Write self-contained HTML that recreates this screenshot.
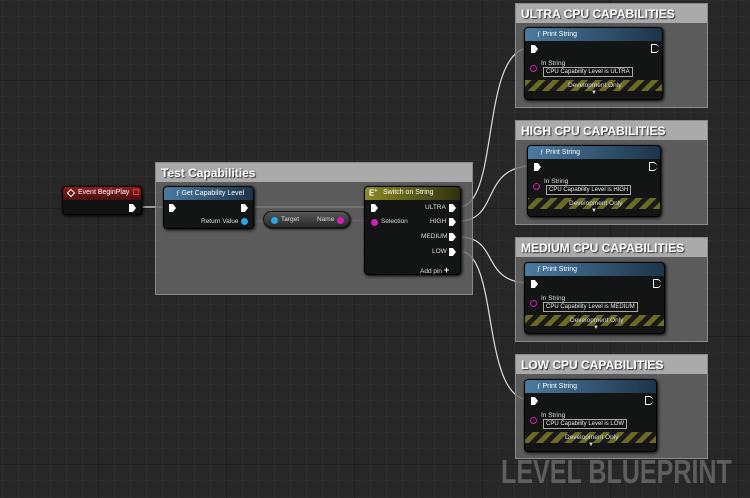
<!DOCTYPE html>
<html><head><style>
*{margin:0;padding:0;box-sizing:border-box}
body{width:750px;height:498px;overflow:hidden;background-color:#272727;
background-image:linear-gradient(#1e1e1e 1px,transparent 1px),linear-gradient(90deg,#1e1e1e 1px,transparent 1px),linear-gradient(#2d2d2d 1px,transparent 1px),linear-gradient(90deg,#2d2d2d 1px,transparent 1px);
background-size:128px 128px,128px 128px,16px 16px,16px 16px;background-position:-30px 80px,-30px 80px,-30px 80px,-30px 80px;
font-family:"Liberation Sans",sans-serif;position:relative;color:#ddd}
.a{position:absolute}
.cm{position:absolute;background:rgba(105,105,105,.8);border:1px solid #8a8a8a}
.cm .h{height:19px;background:#aaaaaa;color:#fff;font-weight:bold;font-size:12px;padding:3px 5px;text-shadow:1px 1px 1px #333;white-space:nowrap}
.nd{position:absolute;background:rgba(16,18,18,.95);border:1px solid #000;border-radius:4px;box-shadow:1px 1px 3px #000;font-size:7px}
.nh{height:13px;border-radius:3px 3px 0 0;color:#fff;padding:2px 0 0 12px;font-size:7px;white-space:nowrap}
.ex{position:absolute;width:7px;height:8px;background:#fff;clip-path:polygon(0 0,55% 0,100% 50%,55% 100%,0 100%)}
.exo{position:absolute;width:8px;height:9px;border:1px solid #fff;border-right:none;border-radius:1px 4px 4px 1px;}
.lb{position:absolute;font-size:6.5px;color:#ddd;white-space:nowrap}
.hz{position:absolute;left:0;right:0;height:11px;background:repeating-linear-gradient(-45deg,#6b6b25 0 5px,#1a1a1a 5px 10px)}
.tb{position:absolute;border:1px solid #aaa;font-size:6px;color:#eee;padding:0 2px;height:10px;line-height:8px;background:#111;white-space:nowrap}
.pin{position:absolute;width:7px;height:7px;border-radius:50%}
</style></head><body>

<svg class="a" width="750" height="498" style="left:0;top:0">
<g fill="none" stroke="#ddd" stroke-width="1.2">
<path d="M141 207 L168 207"/>
<path d="M254 207 L370 207"/>
<path d="M459 207 C500 207,480 48,530 48"/>
<path d="M459 221 C500 221,480 166,533 166"/>
<path d="M459 237 C500 237,480 283,530 283"/>
<path d="M459 251 C500 251,480 400,530 400"/>
</g>
<path d="M248 221 L270 221" stroke="#2aa6e8" stroke-width="1.2"/>
<path d="M345 220 L372 221" stroke="#d21fb9" stroke-width="1.2"/>
</svg>

<div class="cm" style="left:155px;top:162px;width:318px;height:133px"><div class="h">Test Capabilities</div></div>

<div class="nd" style="left:62px;top:186px;width:80px;height:29px">
<div class="nh" style="background:linear-gradient(#8a1e1e,#4a1010);padding-left:15px">Event BeginPlay</div>
<div class="a" style="left:5px;top:3px;width:6px;height:6px;border:1px solid #fff;transform:rotate(45deg)"></div>
<div class="a" style="left:70px;top:2px;width:6px;height:6px;border:1px solid #e33"></div>
<div class="ex" style="left:66px;top:17px"></div>
</div>

<div class="nd" style="left:163px;top:186px;width:91px;height:43px">
<div class="nh" style="background:linear-gradient(90deg,#4b7aa0,#1c3448)"><i style="font-family:'Liberation Serif';color:#fff">ƒ</i> Get Capability Level</div>
<div class="ex" style="left:5px;top:17px"></div>
<div class="ex" style="left:77px;top:17px"></div>
<div class="lb" style="left:37px;top:31px">Return Value</div>
<div class="pin" style="left:77px;top:31px;background:#2aa6e8"></div>
</div>

<div class="a" style="left:263px;top:211px;width:87px;height:17px;border-radius:9px;background:linear-gradient(#555,#2a2a2a);border:1px solid #111;box-shadow:1px 1px 2px #000"></div>
<div class="pin" style="left:271px;top:217px;background:#2aa6e8"></div>
<div class="lb" style="left:281px;top:216px">Target</div>
<div class="lb" style="left:317px;top:216px">Name</div>
<div class="pin" style="left:337px;top:217px;background:#d21fb9"></div>

<div class="nd" style="left:364px;top:186px;width:97px;height:89px">
<div class="nh" style="background:linear-gradient(90deg,#8a8a25,#30300f);padding-left:18px">Switch on String</div>
<div class="a" style="left:4px;top:1px;color:#fff;font-size:8px;font-weight:bold">E<sup style="font-size:5px">+</sup></div>
<div class="ex" style="left:6px;top:17px"></div>
<div class="lb" style="left:60px;top:17px">ULTRA</div><div class="ex" style="left:84px;top:17px"></div>
<div class="pin" style="left:6px;top:32px;background:#d21fb9"></div><div class="lb" style="left:16px;top:31px">Selection</div>
<div class="lb" style="left:65px;top:31px">HIGH</div><div class="ex" style="left:84px;top:31px"></div>
<div class="lb" style="left:56px;top:46px">MEDIUM</div><div class="ex" style="left:84px;top:46px"></div>
<div class="lb" style="left:67px;top:61px">LOW</div><div class="ex" style="left:84px;top:61px"></div>
<div class="lb" style="left:55px;top:78px">Add pin <b style="font-size:9px;color:#fff">+</b></div>
</div>

<div class="cm" style="left:515px;top:3px;width:193px;height:105px"><div class="h">ULTRA CPU CAPABILITIES</div></div>
<div class="cm" style="left:515px;top:120px;width:193px;height:105px"><div class="h">HIGH CPU CAPABILITIES</div></div>
<div class="cm" style="left:515px;top:237px;width:193px;height:105px"><div class="h">MEDIUM CPU CAPABILITIES</div></div>
<div class="cm" style="left:515px;top:354px;width:193px;height:105px"><div class="h">LOW CPU CAPABILITIES</div></div>

<div class="nd" style="left:524px;top:27px;width:139px;height:73px">
<div class="nh" style="background:linear-gradient(90deg,#4b7aa0,#1c3448)"><i style="font-family:'Liberation Serif'">ƒ</i> Print String</div>
<div class="ex" style="left:6px;top:17px"></div><div class="exo" style="left:126px;top:16px"></div>
<div class="lb" style="left:16px;top:32px">In String</div>
<div class="pin" style="left:5px;top:37px;border:1.5px solid #d21fb9"></div>
<div class="tb" style="left:18px;top:39px">CPU Capability Level is ULTRA</div>
<div class="hz" style="top:52px"></div>
<div class="lb" style="left:43px;top:54px">Development Only</div>
<div class="lb" style="left:66px;top:62px;font-size:6px">▼</div>
</div>

<div class="nd" style="left:527px;top:145px;width:134px;height:72px">
<div class="nh" style="background:linear-gradient(90deg,#4b7aa0,#1c3448)"><i style="font-family:'Liberation Serif'">ƒ</i> Print String</div>
<div class="ex" style="left:6px;top:17px"></div><div class="exo" style="left:121px;top:16px"></div>
<div class="lb" style="left:16px;top:32px">In String</div>
<div class="pin" style="left:5px;top:37px;border:1.5px solid #d21fb9"></div>
<div class="tb" style="left:18px;top:39px">CPU Capability Level is HIGH</div>
<div class="hz" style="top:52px"></div>
<div class="lb" style="left:41px;top:54px">Development Only</div>
<div class="lb" style="left:63px;top:62px;font-size:6px">▼</div>
</div>

<div class="nd" style="left:524px;top:262px;width:141px;height:72px">
<div class="nh" style="background:linear-gradient(90deg,#4b7aa0,#1c3448)"><i style="font-family:'Liberation Serif'">ƒ</i> Print String</div>
<div class="ex" style="left:6px;top:17px"></div><div class="exo" style="left:128px;top:16px"></div>
<div class="lb" style="left:16px;top:32px">In String</div>
<div class="pin" style="left:5px;top:37px;border:1.5px solid #d21fb9"></div>
<div class="tb" style="left:18px;top:39px">CPU Capability Level is MEDIUM</div>
<div class="hz" style="top:52px"></div>
<div class="lb" style="left:45px;top:54px">Development Only</div>
<div class="lb" style="left:68px;top:62px;font-size:6px">▼</div>
</div>

<div class="nd" style="left:524px;top:379px;width:133px;height:73px">
<div class="nh" style="background:linear-gradient(90deg,#4b7aa0,#1c3448)"><i style="font-family:'Liberation Serif'">ƒ</i> Print String</div>
<div class="ex" style="left:6px;top:17px"></div><div class="exo" style="left:120px;top:16px"></div>
<div class="lb" style="left:16px;top:32px">In String</div>
<div class="pin" style="left:5px;top:37px;border:1.5px solid #d21fb9"></div>
<div class="tb" style="left:18px;top:39px">CPU Capability Level is LOW</div>
<div class="hz" style="top:52px"></div>
<div class="lb" style="left:40px;top:54px">Development Only</div>
<div class="lb" style="left:63px;top:62px;font-size:6px">▼</div>
</div>

<div class="a" style="left:501px;top:453px;font-size:33px;font-weight:bold;color:rgba(150,150,150,.5);white-space:nowrap;transform:scaleX(0.76);transform-origin:left">LEVEL BLUEPRINT</div>
</body></html>
